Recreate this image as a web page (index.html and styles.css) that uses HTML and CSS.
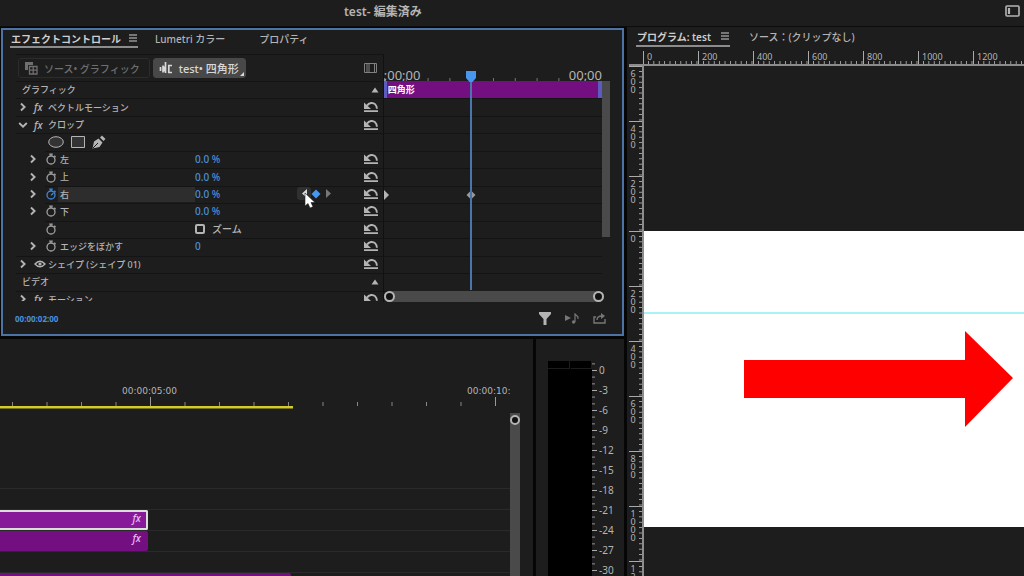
FILE: index.html
```html
<!DOCTYPE html>
<html lang="ja">
<head>
    <meta charset="UTF-8">
    <meta name="viewport" content="width=device-width, initial-scale=1.0">
    <title>test- 編集済み</title>
    <link rel="stylesheet" href="styles.css">
</head>
<body>
    <!-- shared icons -->
    <svg class="sprite" aria-hidden="true">
        <symbol id="i-right" viewBox="0 0 8 10"><path d="M2 1.5 5.6 5 2 8.5" fill="none" stroke="currentColor" stroke-width="1.9"/></symbol>
        <symbol id="i-down" viewBox="0 0 10 8"><path d="M1.2 2 5 5.6 8.8 2" fill="none" stroke="currentColor" stroke-width="1.9"/></symbol>
        <symbol id="i-watch" viewBox="0 0 12 12"><circle cx="6" cy="7" r="4" fill="none" stroke="currentColor" stroke-width="1.3"/><path d="M4.2 1.2h3.6M6 1v2M9.2 2.8l1.4 1.4" stroke="currentColor" stroke-width="1.3"/></symbol>
        <symbol id="i-watch-on" viewBox="0 0 12 12"><circle cx="6" cy="7" r="4" fill="none" stroke="currentColor" stroke-width="1.3"/><path d="M4.2 1.2h3.6M6 1v2M9.2 2.8l1.4 1.4M6 7.4 8.4 5" stroke="currentColor" stroke-width="1.3" fill="none"/></symbol>
        <symbol id="i-reset" viewBox="0 0 16 12"><path d="M1 10.2h14" stroke="currentColor" stroke-width="1.8"/><path d="M4 4.6C6 1.600 10 1.200 12 3.200c1.400 1.400 1.900 2.800 1.900 4.600" fill="none" stroke="currentColor" stroke-width="1.9"/><path d="M1 1.500V8h7z" fill="currentColor"/></symbol>
        <symbol id="i-up" viewBox="0 0 8 6"><path d="M4 .5 7.5 5.5h-7z" fill="currentColor"/></symbol>
        <symbol id="i-menu" viewBox="0 0 8 8"><path d="M0 1h8M0 4h8M0 7h8" stroke="currentColor" stroke-width="1.2"/></symbol>
    </svg>

    <header class="title-bar">
        <h1>test- 編集済み</h1>
        <button class="icon workspace-button" aria-label="ワークスペース">
            <svg width="15" height="12" viewBox="0 0 15 12"><rect x="1" y="1" width="13" height="10" rx="1" fill="none" stroke="currentColor" stroke-width="1.6"/><path d="M4 3v6" stroke="currentColor" stroke-width="2.2"/></svg>
        </button>
    </header>

    <main class="workspace">
        <div class="left-column">
            <section class="effect-panel">
                <nav class="tabs">
                    <button class="tab active">エフェクトコントロール <svg width="8" height="8"><use href="#i-menu"/></svg></button>
                    <button class="tab">Lumetri カラー</button>
                    <button class="tab tab-last">プロパティ</button>
                </nav>

                <div class="effect-body">
                    <div class="props">
                        <div class="clip-select">
                            <button class="clip-button">
                                <svg width="14" height="14" viewBox="0 0 14 14"><path d="M1 1h8v3H4v5H1z" fill="currentColor"/><path d="M5.500 5.500h7.500v7.500h-7.500zM5.500 9.200h7.500M9.200 5.500v7.500" fill="none" stroke="currentColor" stroke-width="1.3"/></svg>
                                ソース• グラフィック
                            </button>
                            <button class="clip-button selected">
                                <svg width="14" height="14" viewBox="0 0 14 14"><path d="M1.500 6v4M4 4.500v7M6.500 1v11" stroke="currentColor" stroke-width="1.700"/><path d="M4 5.500h3v5H4z" fill="currentColor"/><path d="M13 4.500H9.800v7H13" fill="none" stroke="currentColor" stroke-width="1.700"/></svg>
                                test• 四角形
                                <svg class="corner" width="4" height="4"><path d="M4 0v4H0z" fill="currentColor"/></svg>
                            </button>
                            <button class="icon toggle-timeline" aria-label="タイムライン表示">
                                <svg width="13" height="10" viewBox="0 0 13 10"><path d="M.5.5h12v9H.5zM3 .5v9M5 .5v9M10.500.5v9" fill="none" stroke="currentColor"/></svg>
                            </button>
                        </div>

                        <div class="rows">
                            <div class="row">
                                <span class="name">グラフィック</span>
                                <button class="icon collapse" aria-label="閉じる"><svg width="8" height="6"><use href="#i-up"/></svg></button>
                            </div>
                            <div class="row">
                                <div class="name">
                                    <button class="icon twirl" aria-label="開く"><svg width="8" height="10"><use href="#i-right"/></svg></button>
                                    <i class="fx">fx</i>ベクトルモーション
                                </div>
                                <button class="icon reset" aria-label="リセット"><svg width="16" height="12"><use href="#i-reset"/></svg></button>
                            </div>
                            <div class="row">
                                <div class="name">
                                    <button class="icon twirl" aria-label="閉じる"><svg width="10" height="8"><use href="#i-down"/></svg></button>
                                    <i class="fx">fx</i>クロップ
                                </div>
                                <button class="icon reset" aria-label="リセット"><svg width="16" height="12"><use href="#i-reset"/></svg></button>
                            </div>
                            <div class="row masks">
                                <button class="icon" aria-label="楕円形マスク"><svg width="16" height="12"><ellipse cx="8" cy="6" rx="7.300" ry="5.300" fill="#333" stroke="currentColor"/></svg></button>
                                <button class="icon" aria-label="長方形マスク"><svg width="14" height="12"><path d="M.5.5h13v11H.5z" fill="#333" stroke="currentColor"/></svg></button>
                                <button class="icon" aria-label="ペンマスク"><svg width="14" height="14" viewBox="0 0 14 14"><path d="M.5 13.500 2 6.500l4.500-3 4 4-3 4.500zM8 2.500l2-2 3.500 3.500-2 2z" fill="currentColor"/><path d="M1 13 6 8" stroke="#1d1d1d"/></svg></button>
                            </div>
                            <div class="row param">
                                <div class="name">
                                    <button class="icon twirl" aria-label="開く"><svg width="8" height="10"><use href="#i-right"/></svg></button>
                                    <button class="icon watch" aria-label="アニメーション"><svg width="12" height="12"><use href="#i-watch"/></svg></button>
                                    <label for="left">左</label>
                                </div>
                                <input class="value" id="left" type="text" value="0.0 %">
                                <button class="icon reset" aria-label="リセット"><svg width="16" height="12"><use href="#i-reset"/></svg></button>
                            </div>
                            <div class="row param">
                                <div class="name">
                                    <button class="icon twirl" aria-label="開く"><svg width="8" height="10"><use href="#i-right"/></svg></button>
                                    <button class="icon watch" aria-label="アニメーション"><svg width="12" height="12"><use href="#i-watch"/></svg></button>
                                    <label for="top">上</label>
                                </div>
                                <input class="value" id="top" type="text" value="0.0 %">
                                <button class="icon reset" aria-label="リセット"><svg width="16" height="12"><use href="#i-reset"/></svg></button>
                            </div>
                            <div class="row param current">
                                <div class="name">
                                    <button class="icon twirl" aria-label="開く"><svg width="8" height="10"><use href="#i-right"/></svg></button>
                                    <button class="icon watch" aria-label="アニメーション"><svg width="12" height="12"><use href="#i-watch-on"/></svg></button>
                                    <label for="right">右</label>
                                </div>
                                <input class="value" id="right" type="text" value="0.0 %">
                                <div class="key-nav">
                                    <button class="icon prev" aria-label="前のキーフレーム"><svg width="6" height="9"><path d="M6 0v9L1 4.500z" fill="currentColor"/></svg></button>
                                    <button class="icon key" aria-label="キーフレーム"><svg width="10" height="10"><path d="M5 .5 9.500 5 5 9.500.5 5z" fill="currentColor"/></svg></button>
                                    <button class="icon next" aria-label="次のキーフレーム"><svg width="6" height="9"><path d="M0 0v9l5-4.500z" fill="currentColor"/></svg></button>
                                    <svg class="cursor" width="12" height="17" viewBox="0 0 12 17"><path d="M1 1v13l3-2.500 2 4.500 3-1.300L7 10.500h4z" fill="#fff" stroke="#222" stroke-width=".6"/></svg>
                                </div>
                                <button class="icon reset" aria-label="リセット"><svg width="16" height="12"><use href="#i-reset"/></svg></button>
                            </div>
                            <div class="row param">
                                <div class="name">
                                    <button class="icon twirl" aria-label="開く"><svg width="8" height="10"><use href="#i-right"/></svg></button>
                                    <button class="icon watch" aria-label="アニメーション"><svg width="12" height="12"><use href="#i-watch"/></svg></button>
                                    <label for="bottom">下</label>
                                </div>
                                <input class="value" id="bottom" type="text" value="0.0 %">
                                <button class="icon reset" aria-label="リセット"><svg width="16" height="12"><use href="#i-reset"/></svg></button>
                            </div>
                            <div class="row param">
                                <div class="name">
                                    <span class="twirl"></span>
                                    <button class="icon watch" aria-label="アニメーション"><svg width="12" height="12"><use href="#i-watch"/></svg></button>
                                </div>
                                <label class="check"><input type="checkbox"> ズーム</label>
                                <button class="icon reset" aria-label="リセット"><svg width="16" height="12"><use href="#i-reset"/></svg></button>
                            </div>
                            <div class="row param">
                                <div class="name">
                                    <button class="icon twirl" aria-label="開く"><svg width="8" height="10"><use href="#i-right"/></svg></button>
                                    <button class="icon watch" aria-label="アニメーション"><svg width="12" height="12"><use href="#i-watch"/></svg></button>
                                    <label for="feather">エッジをぼかす</label>
                                </div>
                                <input class="value" id="feather" type="text" value="0">
                                <button class="icon reset" aria-label="リセット"><svg width="16" height="12"><use href="#i-reset"/></svg></button>
                            </div>
                            <div class="row">
                                <div class="name">
                                    <button class="icon twirl" aria-label="開く"><svg width="8" height="10"><use href="#i-right"/></svg></button>
                                    <button class="icon eye" aria-label="表示"><svg width="12" height="8"><path d="M1 4Q6-1.500 11 4 6 9.500 1 4z" fill="none" stroke="currentColor" stroke-width="1.400"/><circle cx="6" cy="4" r="1.600" fill="currentColor"/></svg></button>
                                    シェイプ (シェイプ 01)
                                </div>
                                <button class="icon reset" aria-label="リセット"><svg width="16" height="12"><use href="#i-reset"/></svg></button>
                            </div>
                            <div class="row">
                                <span class="name">ビデオ</span>
                                <button class="icon collapse" aria-label="閉じる"><svg width="8" height="6"><use href="#i-up"/></svg></button>
                            </div>
                            <div class="row">
                                <div class="name">
                                    <button class="icon twirl" aria-label="開く"><svg width="8" height="10"><use href="#i-right"/></svg></button>
                                    <i class="fx">fx</i>モーション
                                </div>
                                <button class="icon reset" aria-label="リセット"><svg width="16" height="12"><use href="#i-reset"/></svg></button>
                            </div>
                        </div>
                    </div>

                    <div class="keys">
                        <div class="keys-time"><span>;00;00</span><span>00;00</span></div>
                        <div class="lanes">
                            <div class="lane bar">四角形</div>
                            <div class="lane"></div>
                            <div class="lane"></div>
                            <div class="lane"></div>
                            <div class="lane"></div>
                            <div class="lane"></div>
                            <div class="lane keyed">
                                <svg width="5" height="10"><path d="M0 0v10l5-5z" fill="currentColor"/></svg>
                                <svg class="lane-key" width="10" height="10"><path d="M5 .5 9.500 5 5 9.500.5 5z" fill="currentColor"/></svg>
                            </div>
                            <div class="lane"></div>
                            <div class="lane"></div>
                            <div class="lane"></div>
                            <div class="lane"></div>
                            <div class="lane"></div>
                            <div class="lane"></div>
                        </div>
                        <div class="v-thumb"></div>
                        <div class="h-thumb"><span class="knob"></span><span class="knob"></span></div>
                        <div class="playhead"><svg width="10" height="11"><path d="M0 0h10v7l-3.500 4h-3L0 7z" fill="currentColor"/></svg></div>
                    </div>
                </div>

                <footer class="effect-footer">
                    <span class="timecode">00:00:02:00</span>
                    <button class="icon" aria-label="フィルター"><svg width="12" height="13"><path d="M0 0h12v2L7.500 7v6h-3V7L0 2z" fill="currentColor"/></svg></button>
                    <button class="icon dim" aria-label="オーディオを再生"><svg width="14" height="11" viewBox="0 0 14 11"><path d="M0 2v6l6-3z" fill="currentColor"/><path d="M10 9V1l3 3v2" fill="none" stroke="currentColor" stroke-width="1.200"/><circle cx="8.600" cy="9" r="1.700" fill="currentColor"/></svg></button>
                    <button class="icon dim" aria-label="書き出し"><svg width="13" height="11" viewBox="0 0 13 11"><path d="M3 4H1v6h11V6M4 7c0-3 2-4 5-4" fill="none" stroke="currentColor" stroke-width="1.400"/><path d="M8 0v6l4-3z" fill="currentColor"/></svg></button>
                </footer>
            </section>

            <div class="bottom-row">
                <section class="timeline">
                    <div class="timeline-head">
                        <ol class="time-ruler">
                            <li></li>
                            <li><span>00:00:05:00</span></li>
                            <li><span>00:00:10:</span></li>
                        </ol>
                        <div class="work-area"></div>
                    </div>
                    <div class="timeline-body">
                        <div class="tracks">
                            <div class="track"></div>
                            <div class="track"><div class="clip picked"><i class="fx">fx</i></div></div>
                            <div class="track"><div class="clip"><i class="fx">fx</i></div></div>
                            <div class="track"></div>
                            <div class="track"><div class="clip long"></div></div>
                        </div>
                        <div class="track-scroll"><span class="knob"></span></div>
                    </div>
                </section>

                <section class="meters">
                    <div class="meter"><span></span><span></span></div>
                    <ul class="db-scale">
                        <li>0</li>
                        <li>-3</li>
                        <li>-6</li>
                        <li>-9</li>
                        <li>-12</li>
                        <li>-15</li>
                        <li>-18</li>
                        <li>-21</li>
                        <li>-24</li>
                        <li>-27</li>
                        <li>-30</li>
                    </ul>
                </section>
            </div>
        </div>

        <section class="program-panel">
            <nav class="tabs">
                <button class="tab active">プログラム: test <svg width="8" height="8"><use href="#i-menu"/></svg></button>
                <button class="tab">ソース：(クリップなし)</button>
            </nav>
            <ol class="ruler-x">
                <li>0</li>
                <li>200</li>
                <li>400</li>
                <li>600</li>
                <li>800</li>
                <li>1000</li>
                <li>1200</li>
            </ol>
            <div class="monitor">
                <ol class="ruler-y">
                    <li>600</li>
                    <li>400</li>
                    <li>200</li>
                    <li>0</li>
                    <li>200</li>
                    <li>400</li>
                    <li>600</li>
                    <li>800</li>
                    <li>1000</li>
                    <li>12</li>
                </ol>
                <div class="stage">
                    <svg class="frame" viewBox="0 0 380 296">
                        <rect width="380" height="296" fill="#fff"/>
                        <path d="M0 82h380" stroke="#a9f3f7" stroke-width="2"/>
                        <path d="M100 129h221v-29l48 47-48 49v-29H100z" fill="#f00"/>
                    </svg>
                </div>
            </div>
        </section>
    </main>
</body>
</html>
```

FILE: styles.css
```css
* {
    box-sizing: border-box;
}

body {
    margin: 0;
    height: 100vh;
    display: flex;
    flex-direction: column;
    overflow: hidden;
    background: #1d1d1d;
    color: #b4b4b4;
    font-family: "Noto Sans", "Noto Sans CJK JP", sans-serif;
    font-size: 10px;
}

button,
input {
    font: inherit;
    color: inherit;
}

button {
    padding: 0;
    border: none;
    background: none;
    white-space: nowrap;
}

svg {
    display: block;
    flex: none;
}

ol,
ul {
    margin: 0;
    padding: 0;
    list-style: none;
}

.sprite {
    position: absolute;
    width: 0;
    height: 0;
}

.icon {
    display: flex;
    align-items: center;
    justify-content: center;
}

.fx {
    font-family: "Open Sans", sans-serif;
    font-size: 10px;
    font-weight: 600;
}

/* title bar */
.title-bar {
    display: grid;
    grid-template-columns: 1fr auto 1fr;
    align-items: center;
    height: 27px;
    padding: 0 4px 4px 0;
    border-bottom: 1px solid #0c0c0c;
    flex: none;
}

.title-bar h1 {
    grid-column: 1 / 3;
    margin: 0;
    padding-left: 344px;
    font-size: 12px;
    font-weight: 600;
}

.workspace-button {
    justify-self: end;
}

.workspace {
    flex: 1;
    min-height: 0;
    display: grid;
    grid-template-columns: 624fr 397fr;
    gap: 3px;
    background: #060606;
}

.left-column {
    min-width: 0;
    min-height: 0;
    display: flex;
    flex-direction: column;
    gap: 3px;
    padding-top: 1px;
}

/* tabs */
.tabs {
    display: flex;
    height: 18px;
    flex: none;
}

.tab {
    display: flex;
    align-items: center;
    gap: 8px;
    padding: 0 1px;
    border-bottom: 2px solid transparent;
    font-weight: 500;
}

.tab.active {
    color: #cfcfcf;
    border-color: #8c8c8c;
    margin-right: 16px;
    font-weight: 600;
}

.tab-last {
    margin-left: 32px;
}

/* effect controls */
.effect-panel {
    margin-left: 1px;
    padding: 0 12px 0 13px;
    border: 2px solid #4c73a3;
    background: #1d1d1d;
    flex: none;
}

.effect-panel .tabs {
    margin-left: -6px;
}

.effect-body {
    display: flex;
    margin-top: 6px;
}

.props {
    flex: 368;
    min-width: 0;
    border-top: 1px solid #141414;
    border-right: 1px solid #111;
}

.clip-select {
    display: flex;
    align-items: center;
    gap: 3px;
    height: 26px;
    padding: 0 6px 0 2px;
}

.clip-button {
    position: relative;
    display: flex;
    align-items: center;
    gap: 6px;
    height: 20px;
    padding: 0 9px 0 5px;
    border: 1px solid #2c2c2c;
    border-radius: 3px;
    color: #6f6f6f;
    font-weight: 500;
}

.clip-button.selected {
    padding: 0 6px 0 5px;
    background: #484848;
    border-color: #484848;
    color: #d8d8d8;
    font-size: 11px;
}

.corner {
    position: absolute;
    right: 1px;
    bottom: 1px;
}

.toggle-timeline {
    margin-left: auto;
    color: #808080;
}

.rows,
.lanes {
    display: grid;
    grid-template-rows: repeat(13, 1fr);
    height: 227px;
    margin-bottom: -6px;
}

.rows {
    clip-path: inset(0 0 7px 0);
}

.row {
    min-height: 0;
    display: flex;
    align-items: center;
    padding: 0 4px 1px 6px;
    border-top: 1px solid #141414;
    font-size: 9px;
    font-weight: 500;
}

.name {
    display: flex;
    align-items: center;
}

.twirl {
    flex: none;
    width: 10px;
    margin-left: -4px;
}

.row .fx,
.eye {
    width: 20px;
    padding-left: 6px;
    line-height: 12px;
}

.eye {
    justify-content: flex-start;
}

.reset {
    width: 16px;
    margin-left: auto;
}

.collapse {
    width: 8px;
    margin-left: auto;
}

.masks {
    gap: 7px;
    padding-left: 32px;
}

/* indented rows: the divider starts at the stopwatch */
.row.param {
    border-top: none;
    padding-left: 16px;
    background: linear-gradient(#141414, #141414) 29px 0 / 100% 1px no-repeat;
}

.param .name {
    flex: 0 0 163px;
    align-self: stretch;
}

.watch {
    width: 18px;
    margin-left: 2px;
    padding-left: 3px;
    color: #a0a0a0;
}

.name label {
    padding-left: 2px;
}

.current .watch {
    color: #3d87d8;
}

.current .name label {
    flex: 1;
    align-self: stretch;
    display: flex;
    align-items: center;
    margin-top: 1px;
    background: #2d2d2d;
}

.value {
    width: 60px;
    padding: 0;
    border: none;
    background: none;
    color: #4b90dd;
    font-size: 10px;
    font-weight: 500;
    outline: none;
}

.check {
    display: flex;
    align-items: center;
    gap: 7px;
    font-size: 10px;
}

.check input {
    appearance: none;
    width: 10px;
    height: 10px;
    margin: 0;
    border: 2px solid #b4b4b4;
    border-radius: 2px;
}

.key-nav {
    position: relative;
    display: flex;
    align-items: center;
    margin-left: auto;
    margin-right: 26px;
}

.key-nav .prev {
    width: 14px;
    height: 13px;
    border-radius: 3px;
    background: #303030;
    color: #ddd;
}

.key-nav .key {
    color: #4797ef;
}

.key-nav .next {
    width: 16px;
    color: #777;
}

.key-nav + .reset {
    margin-left: 0;
}

.cursor {
    position: absolute;
    left: 7px;
    top: 5px;
}

/* keyframe area */
.keys {
    position: relative;
    flex: 227;
    min-width: 0;
}

.keys-time {
    display: flex;
    justify-content: space-between;
    align-items: flex-end;
    height: 27px;
    margin-right: 8px;
    background: linear-gradient(90deg, #777 1px, transparent 1px) 0 100% / 10% 3px repeat-x;
    font-size: 13px;
    line-height: 12px;
}

.lanes {
    margin-right: 8px;
}

.lane {
    min-height: 0;
    border-top: 1px solid #141414;
}

.lane.bar {
    display: flex;
    align-items: center;
    padding: 0 1px;
    border: none;
    border-left: 3px solid #5c5cc0;
    border-right: 4px solid #5c5cc0;
    background: #740f82;
    color: #fff;
    font-size: 9px;
    font-weight: bold;
}

.keyed {
    position: relative;
    display: flex;
    align-items: center;
}

.lane-key {
    position: absolute;
    left: 40%;
    margin-left: -5px;
    color: #999;
}

.v-thumb {
    position: absolute;
    right: 0;
    top: 27px;
    width: 8px;
    height: 156px;
    background: #4a4a4a;
}

.h-thumb {
    position: absolute;
    left: 0;
    right: 6px;
    bottom: 0;
    height: 11px;
    display: flex;
    align-items: center;
    justify-content: space-between;
    border-radius: 6px;
    background: #4a4a4a;
}

.knob {
    width: 11px;
    height: 11px;
    border: 2px solid #b4b4b4;
    border-radius: 50%;
    background: #111;
}

.playhead {
    position: absolute;
    left: 0;
    right: 8px;
    top: 17px;
    bottom: 12px;
    background: linear-gradient(#4a76ac, #4a76ac) 40% 0 / 2px 100% no-repeat;
    color: #4797ef;
    pointer-events: none;
}

.playhead svg {
    margin-left: calc(40% - 5px);
}

.effect-footer {
    display: flex;
    align-items: center;
    gap: 14px;
    height: 32px;
    padding-right: 4px;
}

.timecode {
    margin-left: -1px;
    margin-right: auto;
    color: #4b90dd;
    font-size: 8px;
    font-weight: bold;
}

.dim {
    color: #777;
}

/* timeline */
.bottom-row {
    flex: 1;
    min-height: 0;
    display: grid;
    grid-template-columns: 533fr 88fr;
    gap: 3px;
}

.timeline {
    min-width: 0;
    min-height: 0;
    display: flex;
    flex-direction: column;
    overflow: hidden;
    background: #1d1d1d;
}

.timeline-head {
    margin-right: 19px;
    padding-top: 45px;
    overflow: hidden;
    flex: none;
}

.time-ruler {
    display: flex;
    margin-left: -195px;
}

.time-ruler li {
    flex: 0 0 345px;
    height: 22px;
    background:
        linear-gradient(#999, #999) 0 100% / 1px 9px no-repeat,
        linear-gradient(90deg, #888 1px, transparent 1px) 0 100% / 10% 4px repeat-x;
    font-family: "DejaVu Sans", sans-serif;
    font-size: 9px;
    line-height: 14px;
}

.time-ruler span {
    display: block;
    margin-left: -28px;
}

.work-area {
    width: 57%;
    height: 3px;
    background: #d3cb2c;
    border-bottom: 1px solid #77731c;
}

.timeline-body {
    flex: 1;
    min-height: 0;
    display: flex;
    padding: 4px 13px 0 0;
}

.tracks {
    flex: 1;
    padding-top: 75px;
}

.track {
    height: 21px;
    border-top: 1px solid #2a2a2a;
}

.clip {
    width: 29%;
    height: 20px;
    padding-right: 7px;
    border-radius: 0 2px 2px 0;
    background: #740f82;
    color: #e6b4ec;
    text-align: right;
    line-height: 15px;
}

.clip.picked {
    border: 2px solid #ddd;
    border-left: none;
    padding-right: 5px;
    background: #871a98;
    line-height: 12px;
}

.clip.long {
    width: 57%;
}

.track-scroll {
    width: 10px;
    padding-top: 2px;
    background: #4a4a4a;
}

.track-scroll .knob {
    display: block;
    width: 10px;
    height: 10px;
}

/* audio meters */
.meters {
    display: flex;
    min-height: 0;
    overflow: hidden;
    padding: 22px 0 0 12px;
    background: #1d1d1d;
}

.meter {
    flex: 0 0 44px;
    display: flex;
    gap: 1px;
    background: #000;
}

.meter span {
    flex: 1;
    height: 8px;
    border-bottom: 1px solid #1d1d1d;
    border-right: 1px solid #1d1d1d;
}

.db-scale li {
    height: 20px;
    padding-left: 7px;
    background:
        linear-gradient(#aaa, #aaa) 0 9px / 5px 1px no-repeat,
        linear-gradient(#999 1px, transparent 1px) 0 9px / 3px 33% repeat-y;
    font-size: 10px;
    line-height: 18px;
}

/* program monitor */
.program-panel {
    min-width: 0;
    min-height: 0;
    display: flex;
    flex-direction: column;
    overflow: hidden;
    padding-left: 2px;
    background: #1d1d1d;
}

.program-panel .tabs {
    height: 20px;
    margin-left: 7px;
}

.program-panel .tab {
    gap: 10px;
}

.program-panel .tab.active {
    margin-right: 18px;
}

.ruler-x {
    flex: none;
    display: flex;
    height: 15px;
    margin-top: 4px;
    padding-left: 14px;
    border-bottom: 2px solid #8c8c8c;
    overflow: hidden;
}

.ruler-x li {
    flex: 0 0 55px;
    padding-left: 3px;
    border-left: 1px solid #aaa;
    background: linear-gradient(90deg, #aaa 1px, transparent 1px) 4px 100% / 10% 3px repeat-x;
    font-size: 9px;
    line-height: 11px;
}

.monitor {
    flex: 1;
    min-height: 0;
    display: flex;
}

.ruler-y {
    flex: 0 0 15px;
    border-right: 2px solid #8c8c8c;
    overflow: hidden;
}

.ruler-y li {
    height: 55px;
    padding: 3px 6px 0 1px;
    border-top: 1px solid #aaa;
    background: linear-gradient(#aaa 1px, transparent 1px) 100% 4px / 3px 10% repeat-y;
    font-size: 9px;
    line-height: 8px;
    text-align: center;
    word-break: break-all;
}

.stage {
    flex: 1;
    min-width: 0;
    padding-top: 165px;
}

.frame {
    width: 100%;
    height: auto;
}
```
